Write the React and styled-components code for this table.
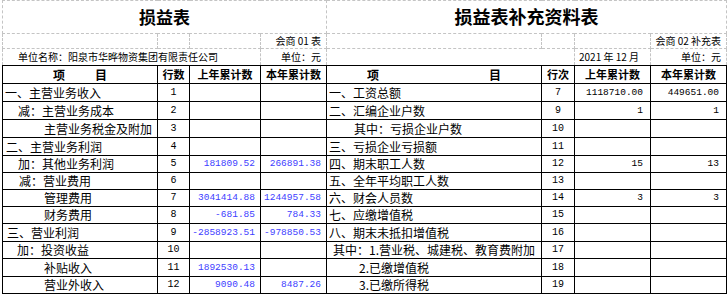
import React from 'react';
import styled, { createGlobalStyle } from 'styled-components';

const GlobalStyle = createGlobalStyle`
  html, body {
    margin: 0;
    padding: 0;
    background: #fff;
  }
  body {
    font-family: "Noto Sans CJK SC", "Liberation Sans", sans-serif;
    color: #000;
  }
`;

const Page = styled.div`
  width: 728px;
  height: 294px;
  overflow: hidden;
  padding-left: 2px;
  box-sizing: border-box;
`;

const Sheet = styled.table`
  width: 724px;
  border-collapse: collapse;
  table-layout: fixed;
`;

const Row = styled.tr`
  height: ${p => p.$h}px;
`;

const GridCell = styled.td`
  border: 1px dashed #c4c4c4;
  padding: 0 ${p => p.$padR ?? 0}px 0 ${p => p.$padL ?? 0}px;
  font-size: 10px;
  line-height: 1;
  text-align: ${p => p.$align || 'left'};
  vertical-align: middle;
  white-space: nowrap;
  overflow: hidden;
`;

const TitleCell = styled(GridCell)`
  font-size: ${p => p.$size}px;
  font-weight: 700;
  text-align: center;
  padding-bottom: 2px;
`;

const Cell = styled.td`
  border: 1px solid #000;
  padding: 0;
  font-size: 12px;
  line-height: 1;
  vertical-align: middle;
  white-space: nowrap;
  overflow: hidden;
`;

const HeadCell = styled(Cell)`
  font-size: 11px;
  font-weight: 700;
  text-align: center;
`;

const HeadItem = styled.div`
  display: flex;
  justify-content: space-between;
  padding: 0 ${p => p.$pad}px;
  font-size: 12px;
`;

const ItemCell = styled(Cell)`
  padding-left: ${p => p.$indent}px;
`;

const LineCell = styled(Cell)`
  text-align: center;
  font-family: "Liberation Mono", monospace;
  font-size: 10px;
`;

const NumCell = styled(Cell)`
  text-align: right;
  padding-right: ${p => p.$padR}px;
  font-family: "Liberation Mono", monospace;
  font-size: 9.5px;
  color: ${p => p.$color};
`;

const widths = [155, 32, 71, 66, 215, 33, 76, 76];

const leftRows = [
  { item: '一、主营业务收入', indent: 2, no: '1' },
  { item: '减：主营业务成本', indent: 15, no: '2' },
  { item: '主营业务税金及附加', indent: 41, no: '3' },
  { item: '二、主营业务利润', indent: 3, no: '4' },
  { item: '加：其他业务利润', indent: 15, no: '5', prev: '181809.52', cur: '266891.38' },
  { item: '减：营业费用', indent: 16, no: '6' },
  { item: '管理费用', indent: 41, no: '7', prev: '3041414.88', cur: '1244957.58' },
  { item: '财务费用', indent: 41, no: '8', prev: '-681.85', cur: '784.33' },
  { item: '三、营业利润', indent: 4, no: '9', prev: '-2858923.51', cur: '-978850.53' },
  { item: '加：投资收益', indent: 14, no: '10' },
  { item: '补贴收入', indent: 41, no: '11', prev: '1892530.13' },
  { item: '营业外收入', indent: 41, no: '12', prev: '9090.48', cur: '8487.26' },
];

const rightRows = [
  { item: '一、工资总额', indent: 2, no: '7', prev: '1118710.00', cur: '449651.00' },
  { item: '二、汇编企业户数', indent: 2, no: '9', prev: '1', cur: '1' },
  { item: '其中：亏损企业户数', indent: 27, no: '10' },
  { item: '三、亏损企业亏损额', indent: 2, no: '11' },
  { item: '四、期末职工人数', indent: 2, no: '12', prev: '15', cur: '13' },
  { item: '五、全年平均职工人数', indent: 2, no: '13' },
  { item: '六、财会人员数', indent: 2, no: '14', prev: '3', cur: '3' },
  { item: '七、应缴增值税', indent: 2, no: '15' },
  { item: '八、期末未抵扣增值税', indent: 2, no: '16' },
  { item: '其中：1.营业税、城建税、教育费附加', indent: 6, no: '17' },
  { item: '2.已缴增值税', indent: 32, no: '18' },
  { item: '3.已缴所得税', indent: 32, no: '19' },
];

const rowHeights = [18, 18, 18, 18, 17, 17, 17, 17, 18, 17, 18, 17];

export default function App() {
  return (
    <Page>
      <GlobalStyle />
      <Sheet>
        <colgroup>
          {widths.map((w, i) => <col key={i} style={{ width: w }} />)}
        </colgroup>
        <tbody>
          <Row $h={33}>
            <TitleCell colSpan={4} $size={17}>损益表</TitleCell>
            <TitleCell colSpan={4} $size={18}>损益表补充资料表</TitleCell>
          </Row>
          <Row $h={15}>
            <GridCell />
            <GridCell />
            <GridCell />
            <GridCell $align="right" $padR={5}>会商 01 表</GridCell>
            <GridCell />
            <GridCell />
            <GridCell />
            <GridCell $align="right" $padR={5}>会商 02 补充表</GridCell>
          </Row>
          <Row $h={17}>
            <GridCell colSpan={3} $padL={15}>单位名称：阳泉市华晔物资集团有限责任公司</GridCell>
            <GridCell $align="right" $padR={5}>单位：元</GridCell>
            <GridCell colSpan={2} />
            <GridCell $padL={4}>2021 年 12 月</GridCell>
            <GridCell $align="right" $padR={5}>单位：元</GridCell>
          </Row>
          <Row $h={18}>
            <HeadCell><HeadItem $pad={50}><span>项</span><span>目</span></HeadItem></HeadCell>
            <HeadCell>行数</HeadCell>
            <HeadCell>上年累计数</HeadCell>
            <HeadCell>本年累计数</HeadCell>
            <HeadCell><HeadItem $pad={40}><span>项</span><span>目</span></HeadItem></HeadCell>
            <HeadCell>行次</HeadCell>
            <HeadCell>上年累计数</HeadCell>
            <HeadCell>本年累计数</HeadCell>
          </Row>
          {leftRows.map((l, i) => {
            const r = rightRows[i];
            return (
              <Row key={i} $h={rowHeights[i]}>
                <ItemCell $indent={l.indent}>{l.item}</ItemCell>
                <LineCell>{l.no}</LineCell>
                <NumCell $padR={5} $color="#4040ff">{l.prev}</NumCell>
                <NumCell $padR={5} $color="#4040ff">{l.cur}</NumCell>
                <ItemCell $indent={r.indent}>{r.item}</ItemCell>
                <LineCell>{r.no}</LineCell>
                <NumCell $padR={7} $color="#000">{r.prev}</NumCell>
                <NumCell $padR={7} $color="#000">{r.cur}</NumCell>
              </Row>
            );
          })}
        </tbody>
      </Sheet>
    </Page>
  );
}
